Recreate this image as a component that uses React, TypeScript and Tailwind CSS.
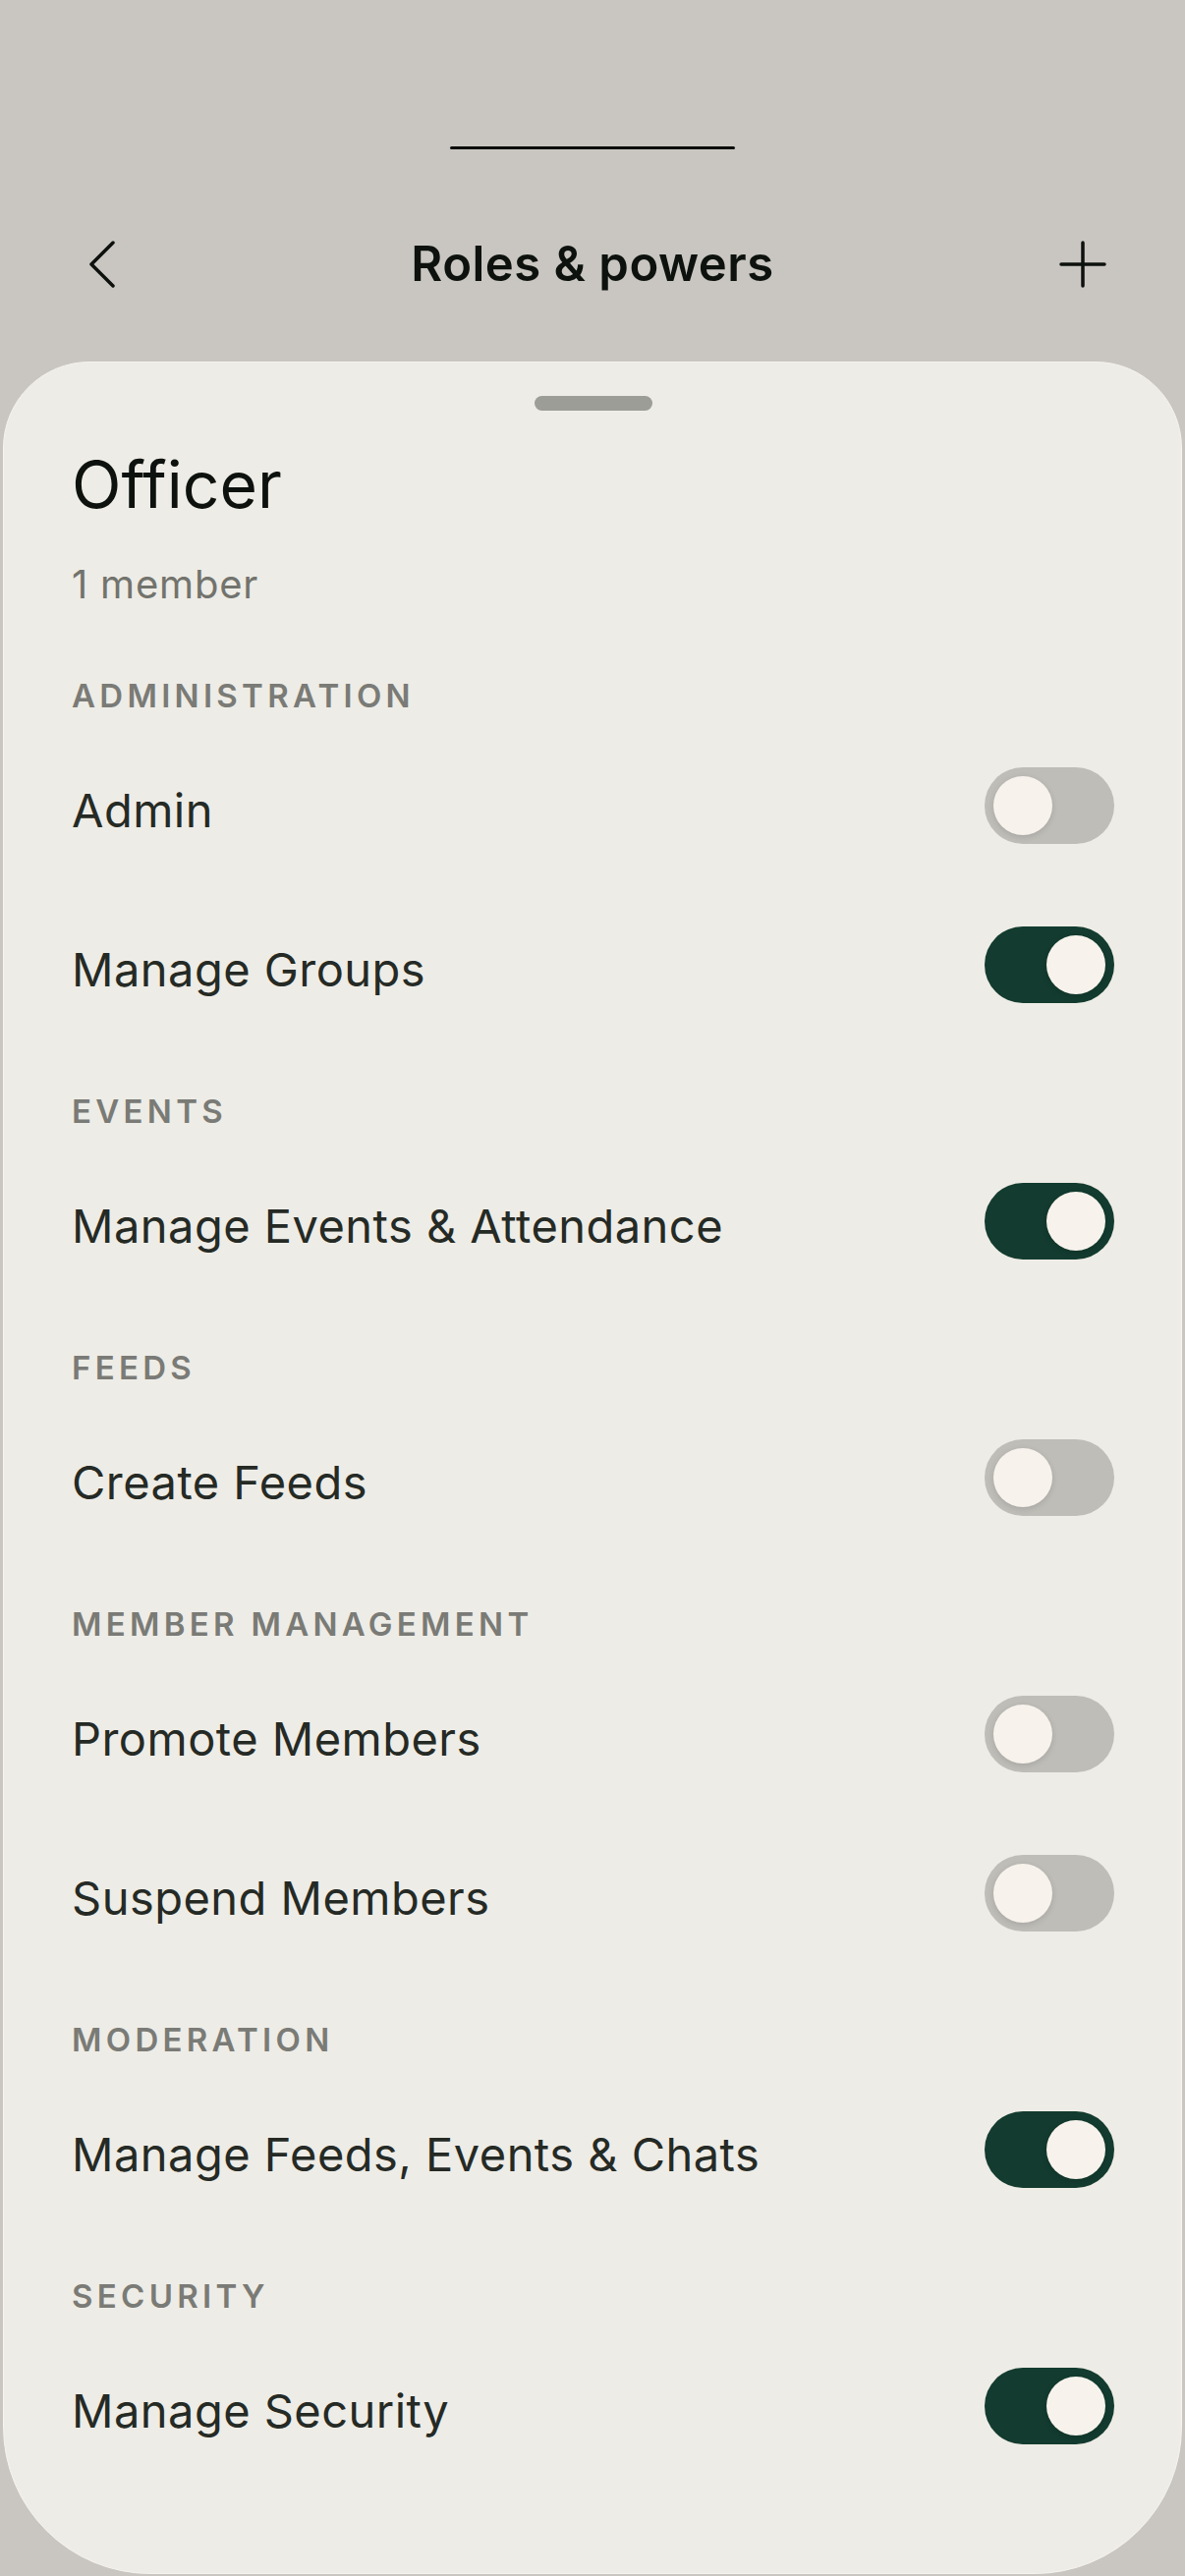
import { useState } from "react";

type Permission = { label: string; on: boolean };
type Section = { title: string; items: Permission[] };

const SECTIONS: Section[] = [
  { title: "Administration", items: [{ label: "Admin", on: false }, { label: "Manage Groups", on: true }] },
  { title: "Events", items: [{ label: "Manage Events & Attendance", on: true }] },
  { title: "Feeds", items: [{ label: "Create Feeds", on: false }] },
  {
    title: "Member Management",
    items: [
      { label: "Promote Members", on: false },
      { label: "Suspend Members", on: false },
    ],
  },
  { title: "Moderation", items: [{ label: "Manage Feeds, Events & Chats", on: true }] },
  { title: "Security", items: [{ label: "Manage Security", on: true }] },
];

function Toggle({ on, onChange }: { on: boolean; onChange: () => void }) {
  return (
    <button
      type="button"
      onClick={onChange}
      className={`flex h-[78px] w-[132px] shrink-0 items-center rounded-full px-[9px] ${
        on ? "justify-end bg-[#133b2f]" : "justify-start bg-[#bebdb8]"
      }`}
    >
      <span className="block h-[60px] w-[60px] rounded-full bg-[#f7f3ec] shadow-[0_2px_6px_rgba(0,0,0,0.12)]" />
    </button>
  );
}

export default function App() {
  const [state, setState] = useState(SECTIONS.map((s) => s.items.map((i) => i.on)));

  const flip = (si: number, ii: number) =>
    setState((prev) => prev.map((row, r) => row.map((v, c) => (r === si && c === ii ? !v : v))));

  return (
    <div className="flex h-[2622px] w-[1206px] flex-col bg-[#c9c6c1] font-['Inter',sans-serif]">
      <div className="mx-auto mt-[149px] h-[3px] w-[290px] rounded-full bg-[#0a0d0a]" />

      <header className="mt-[67px] flex h-[100px] items-center justify-between px-[80px]">
        <svg width="48" height="48" viewBox="0 0 48 48" fill="none" stroke="#0d110e" strokeWidth="3.5" strokeLinecap="round" strokeLinejoin="round">
          <path d="M35 2 L13 24 L35 46" />
        </svg>
        <h1 className="text-[49px] font-semibold tracking-[0.01em] text-[#0d120e]">Roles &amp; powers</h1>
        <svg width="48" height="48" viewBox="0 0 48 48" fill="none" stroke="#0d110e" strokeWidth="3.5" strokeLinecap="round">
          <path d="M24 2 V46 M2 24 H46" />
        </svg>
      </header>

      <main className="mx-[3px] mb-[2px] mt-[49px] flex flex-1 flex-col rounded-b-[150px] rounded-t-[88px] border border-[#f6f4ef] bg-[#eeece6] pl-[69px] pr-[68px]">
        <div className="mx-auto mt-[34px] h-[15px] w-[120px] rounded-full bg-[#9d9d97]" />

        <h2 className="mt-[37px] text-[66px] font-normal leading-[76px] text-[#0d120e]">Officer</h2>
        <p className="mt-[41px] text-[40px] leading-[46px] tracking-[0.02em] text-[#72736d]">1 member</p>

        {SECTIONS.map((section, si) => (
          <section key={section.title} className={si === 0 ? "mt-[70px]" : "mt-[90px]"}>
            <h3 className="mb-[53px] text-[33px] font-semibold uppercase leading-[40px] tracking-[0.13em] text-[#7a7b76]">
              {section.title}
            </h3>
            <div className="flex flex-col gap-[84px]">
              {section.items.map((item, ii) => (
                <div key={item.label} className="flex h-[78px] items-center justify-between">
                  <span className="pt-[10px] text-[47px] tracking-[0.01em] text-[#252a25]">{item.label}</span>
                  <Toggle on={state[si][ii]} onChange={() => flip(si, ii)} />
                </div>
              ))}
            </div>
          </section>
        ))}
      </main>
    </div>
  );
}
